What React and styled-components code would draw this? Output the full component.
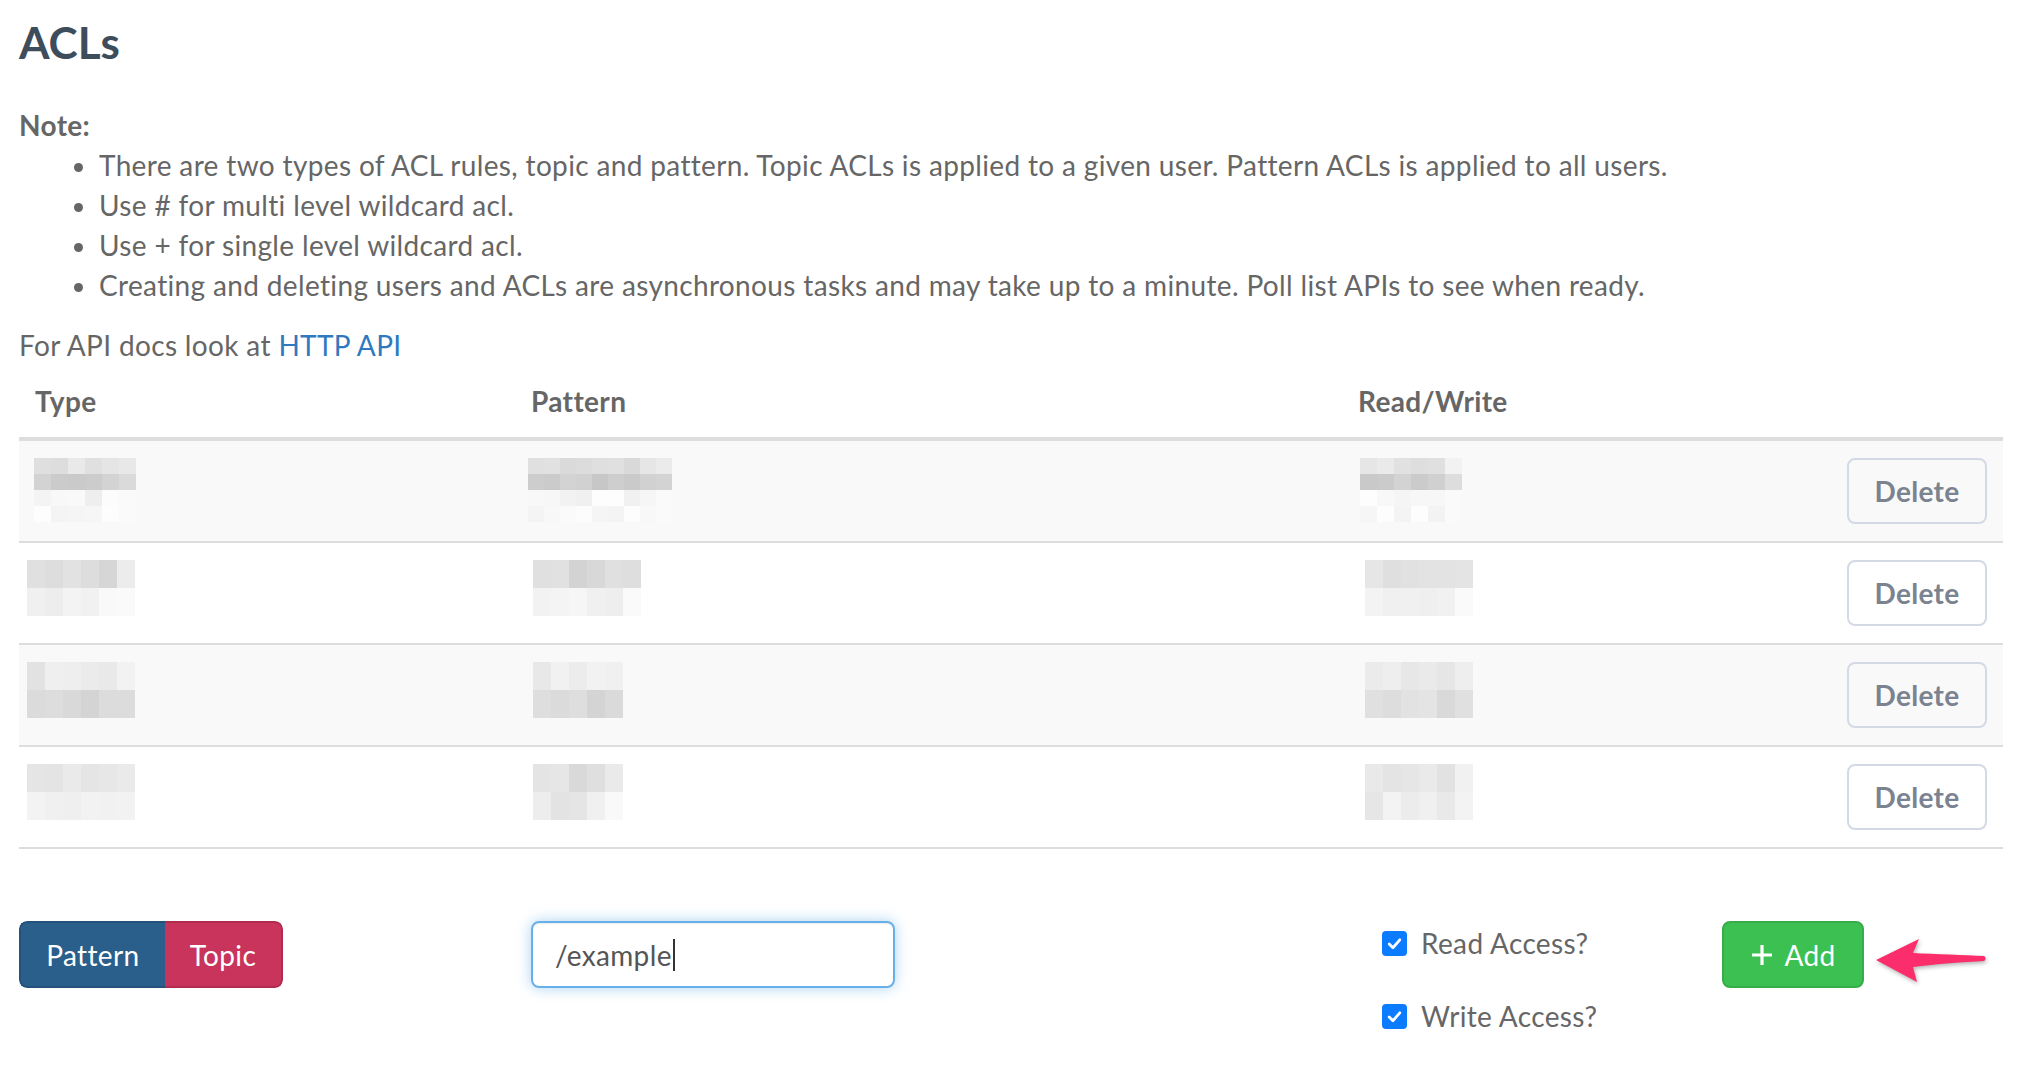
import React from 'react';
import styled, { createGlobalStyle } from 'styled-components';

const Global = createGlobalStyle`
  html, body { margin: 0; padding: 0; background: #fff; }
  body {
    font-family: Lato, "Open Sans", "Noto Sans", sans-serif;
    color: #666;
    font-size: 28px;
    line-height: 40px;
    letter-spacing: 0.35px;
  }
`;

const Page = styled.div`
  padding: 18px 21px 0 19px;
`;

const Title = styled.h2`
  margin: 0;
  font-size: 44px;
  line-height: 48px;
  font-weight: 700;
  color: #3e4d5c;
  letter-spacing: 0;
`;

const NoteLabel = styled.div`
  margin-top: 39px;
  font-weight: 700;
`;

const List = styled.ul`
  margin: 0 0 20px;
  padding-left: 80px;
`;

const Para = styled.p`
  margin: 0;
`;

const Link = styled.a`
  color: #2f7abf;
  text-decoration: none;
`;

const Table = styled.table`
  width: 100%;
  border-collapse: collapse;
  table-layout: fixed;
`;

const Th = styled.th`
  text-align: left;
  font-weight: 700;
  color: #666;
  padding: 16px;
  line-height: 40px;
  border-bottom: 4px solid #ddd;
`;

const Tr = styled.tr`
  background: ${(p) => (p.$striped ? '#f9f9f9' : 'transparent')};
  &:last-child td { border-bottom: 2px solid #ddd; }
`;

const Td = styled.td`
  padding: 17px 16px;
  border-top: 2px solid #ddd;
  vertical-align: top;
  text-align: ${(p) => (p.$right ? 'right' : 'left')};
`;

const DeleteButton = styled.button`
  width: 140px;
  height: 66px;
  border: 2px solid #d3dae6;
  border-radius: 8px;
  background: transparent;
  color: #7b8391;
  font-family: inherit;
  font-size: 28px;
  font-weight: 700;
  letter-spacing: 0.3px;
  cursor: pointer;
`;

const MosaicGrid = styled.div`
  display: grid;
  grid-template-columns: repeat(${(p) => p.$cols}, ${(p) => p.$cw}px);
  grid-auto-rows: ${(p) => p.$ch}px;
  margin-left: ${(p) => p.$ml || 0}px;
`;

const MosaicCell = styled.div`
  background: ${(p) => p.$c};
`;

function rng(seed) {
  let s = seed;
  return () => {
    s = (s * 9301 + 49297) % 233280;
    return s / 233280;
  };
}

function Mosaic({ cols, bases, seed, cw = 17, ch = 16, ml = 0 }) {
  const r = rng(seed);
  const cells = [];
  bases.forEach((b, ri) => {
    for (let c = 0; c < cols; c++) {
      let v = b + Math.round((r() - 0.5) * 16);
      if (c === cols - 1) v = Math.min(250, v + 10);
      v = Math.max(0, Math.min(253, v));
      cells.push(<MosaicCell key={ri + '-' + c} $c={`rgb(${v},${v},${v})`} />);
    }
  });
  return (
    <MosaicGrid $cols={cols} $cw={cw} $ch={ch} $ml={ml}>
      {cells}
    </MosaicGrid>
  );
}

const Form = styled.div`
  display: grid;
  grid-template-columns: 512px 851px 340px auto;
  align-items: start;
  margin-top: 72px;
`;

const Toggle = styled.div`
  display: inline-flex;
  border-radius: 8px;
  overflow: hidden;
  height: 67px;
  width: 264px;
`;

const ToggleButton = styled.button`
  flex: ${(p) => p.$grow};
  border: 2px solid ${(p) => p.$border};
  background: ${(p) => p.$bg};
  color: #fff;
  font-family: inherit;
  font-size: 28px;
  letter-spacing: 0.35px;
  padding: 0;
  cursor: pointer;
  &:first-child { border-right: none; border-radius: 8px 0 0 8px; }
  &:last-child { border-left: none; border-radius: 0 8px 8px 0; }
`;

const FakeInput = styled.div`
  box-sizing: border-box;
  width: 364px;
  height: 67px;
  border: 2px solid #66afe9;
  border-radius: 8px;
  box-shadow: 0 0 14px rgba(102, 175, 233, 0.55), inset 0 1px 1px rgba(0, 0, 0, 0.075);
  padding: 0 22px;
  display: flex;
  align-items: center;
  color: #555;
  font-size: 28px;
`;

const Caret = styled.span`
  display: inline-block;
  width: 2px;
  height: 32px;
  background: #333;
  margin-left: 1px;
`;

const Checks = styled.div`
  display: flex;
  flex-direction: column;
  gap: 33px;
  padding-top: 2px;
`;

const CheckRow = styled.label`
  display: flex;
  align-items: center;
  gap: 14px;
  color: #666;
  font-size: 28px;
  line-height: 40px;
`;

const CheckBox = styled.span`
  width: 25px;
  height: 25px;
  border-radius: 4px;
  background: #0b7bff;
  display: inline-flex;
  align-items: center;
  justify-content: center;
`;

const AddWrap = styled.div`
  display: flex;
  align-items: flex-start;
  gap: 10px;
`;

const AddButton = styled.button`
  width: 142px;
  height: 67px;
  border: 2px solid #36ad4a;
  border-radius: 8px;
  background: #3cc052;
  color: #fff;
  font-family: inherit;
  font-size: 28px;
  letter-spacing: 0.35px;
  display: inline-flex;
  align-items: center;
  justify-content: center;
  gap: 10px;
  padding: 0;
  cursor: pointer;
`;

const Arrow = styled.svg`
  margin-top: 16px;
  filter: drop-shadow(1px 2px 2px rgba(0, 0, 0, 0.3));
`;

const rows = [
  {
    striped: true,
    type: { cols: 6, bases: [226, 204, 246, 249], seed: 3, ml: -1 },
    pattern: { cols: 9, bases: [224, 206, 247, 249], seed: 7, cw: 16, ml: -3 },
    rw: { cols: 6, bases: [228, 206, 248, 250], seed: 11, ml: 2 },
  },
  {
    striped: false,
    type: { cols: 6, bases: [220, 244], seed: 13, cw: 18, ch: 28, ml: -8 },
    pattern: { cols: 6, bases: [218, 244], seed: 17, cw: 18, ch: 28, ml: 2 },
    rw: { cols: 6, bases: [222, 244], seed: 19, cw: 18, ch: 28, ml: 7 },
  },
  {
    striped: true,
    type: { cols: 6, bases: [232, 218], seed: 23, cw: 18, ch: 28, ml: -8 },
    pattern: { cols: 5, bases: [234, 216], seed: 29, cw: 18, ch: 28, ml: 2 },
    rw: { cols: 6, bases: [236, 220], seed: 31, cw: 18, ch: 28, ml: 7 },
  },
  {
    striped: false,
    type: { cols: 6, bases: [226, 236], seed: 37, cw: 18, ch: 28, ml: -8 },
    pattern: { cols: 5, bases: [222, 234], seed: 41, cw: 18, ch: 28, ml: 2 },
    rw: { cols: 6, bases: [226, 236], seed: 43, cw: 18, ch: 28, ml: 7 },
  },
];

export default function App() {
  return (
    <Page>
      <Global />
      <Title>ACLs</Title>
      <NoteLabel>Note:</NoteLabel>
      <List>
        <li>There are two types of ACL rules, topic and pattern. Topic ACLs is applied to a given user. Pattern ACLs is applied to all users.</li>
        <li>Use # for multi level wildcard acl.</li>
        <li>Use + for single level wildcard acl.</li>
        <li>Creating and deleting users and ACLs are asynchronous tasks and may take up to a minute. Poll list APIs to see when ready.</li>
      </List>
      <Para>
        For API docs look at <Link href="#">HTTP API</Link>
      </Para>

      <Table>
        <colgroup>
          <col style={{ width: 496 }} />
          <col style={{ width: 827 }} />
          <col style={{ width: 488 }} />
          <col />
        </colgroup>
        <thead>
          <tr>
            <Th>Type</Th>
            <Th>Pattern</Th>
            <Th>Read/Write</Th>
            <Th />
          </tr>
        </thead>
        <tbody>
          {rows.map((r, i) => (
            <Tr key={i} $striped={r.striped}>
              <Td><Mosaic {...r.type} /></Td>
              <Td><Mosaic {...r.pattern} /></Td>
              <Td><Mosaic {...r.rw} /></Td>
              <Td $right>
                <DeleteButton>Delete</DeleteButton>
              </Td>
            </Tr>
          ))}
        </tbody>
      </Table>

      <Form>
        <div>
          <Toggle>
            <ToggleButton $grow={146} $bg="#2a5e8b" $border="#25527a">Pattern</ToggleButton>
            <ToggleButton $grow={118} $bg="#c8345b" $border="#b02c50">Topic</ToggleButton>
          </Toggle>
        </div>
        <div>
          <FakeInput role="textbox">
            /example<Caret />
          </FakeInput>
        </div>
        <Checks>
          <CheckRow>
            <CheckBox>
              <svg width="17" height="17" viewBox="0 0 16 16">
                <path d="M3 8.5 L6.5 12 L13 4.5" fill="none" stroke="#fff" strokeWidth="2.6" strokeLinecap="round" strokeLinejoin="round" />
              </svg>
            </CheckBox>
            Read Access?
          </CheckRow>
          <CheckRow>
            <CheckBox>
              <svg width="17" height="17" viewBox="0 0 16 16">
                <path d="M3 8.5 L6.5 12 L13 4.5" fill="none" stroke="#fff" strokeWidth="2.6" strokeLinecap="round" strokeLinejoin="round" />
              </svg>
            </CheckBox>
            Write Access?
          </CheckRow>
        </Checks>
        <AddWrap>
          <AddButton>
            <svg width="24" height="24" viewBox="0 0 24 24">
              <path d="M12 2 V22 M2 12 H22" stroke="#fff" strokeWidth="3.2" fill="none" />
            </svg>
            Add
          </AddButton>
          <Arrow width="116" height="50" viewBox="0 0 116 50">
            <path
              d="M2 23 L45 2 L39 16 C62 17 90 18 110 19 C112 20 112 23 110 24 C90 25 62 27 39 30 L43 45 Z"
              fill="#fb2d6b"
            />
          </Arrow>
        </AddWrap>
      </Form>
    </Page>
  );
}
